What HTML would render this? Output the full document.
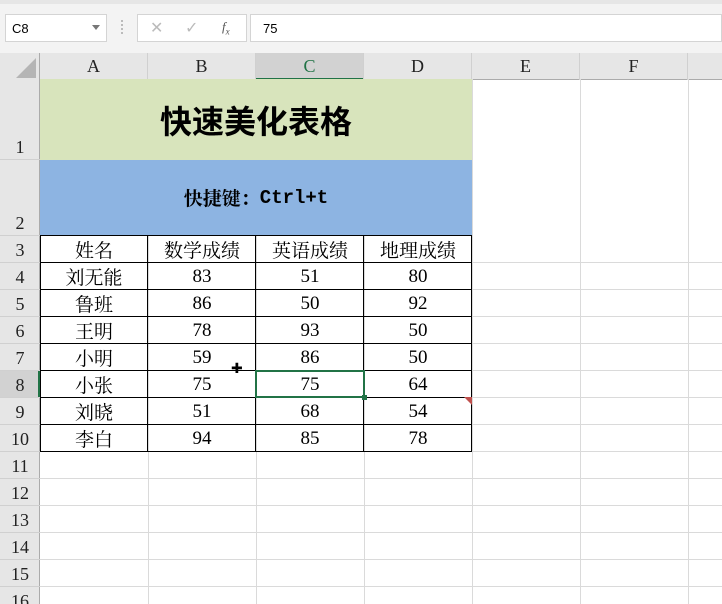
<!DOCTYPE html><html><head><meta charset="utf-8"><style>
html,body{margin:0;width:722px;height:604px;overflow:hidden}
body{background:#fff;position:relative;font-family:"Liberation Serif","Noto Serif CJK SC",serif}
.a{position:absolute;box-sizing:border-box}
.t{display:flex;align-items:center;justify-content:center;font-size:19px;color:#000}
</style></head><body>
<div class="a" style="left:0;top:0;width:722px;height:53px;background:#f3f3f3;border-top:4px solid #e6e6e6"></div>
<div class="a" style="left:5px;top:14px;width:102px;height:28px;background:#fff;border:1px solid #d4d4d4;font:13px 'Liberation Sans',sans-serif;padding:6px 6px">C8</div>
<div class="a" style="left:92px;top:25px;width:0;height:0;border-left:4px solid transparent;border-right:4px solid transparent;border-top:5px solid #777"></div>
<div class="a" style="left:121px;top:20px;width:2px;height:14px;border-left:2px dotted #bbb"></div>
<div class="a" style="left:137px;top:14px;width:110px;height:28px;background:#fff;border:1px solid #d4d4d4;font:16px 'Liberation Sans',sans-serif;color:#bbb"><span style="position:absolute;left:12px;top:3px">✕</span><span style="position:absolute;left:47px;top:3px">✓</span><span style="position:absolute;left:84px;top:4px;color:#555;font:italic 13px 'Liberation Serif',serif">f<sub style="font-size:9px">x</sub></span></div>
<div class="a" style="left:250px;top:14px;width:472px;height:28px;background:#fff;border:1px solid #d4d4d4;font:13px 'Liberation Sans',sans-serif;padding:6px 12px">75</div>
<div class="a" style="left:0;top:53px;width:722px;height:27px;background:#e6e6e6;border-bottom:1px solid #ababab"></div>
<div class="a" style="left:0;top:53px;width:40px;height:551px;background:#e6e6e6;border-right:1px solid #ababab"></div>
<div class="a" style="left:16px;top:58px;width:0;height:0;border-left:20px solid transparent;border-bottom:20px solid #b5b5b5"></div>
<div class="a" style="left:256px;top:53px;width:108px;height:27px;background:#d2d2d2;border-bottom:2px solid #217346"></div>
<div class="a" style="left:0;top:371px;width:40px;height:27px;background:#d2d2d2;border-right:2px solid #217346"></div>
<div id="hdr"></div>
<svg class="a" style="left:40px;top:79px" width="682" height="525">
<g stroke="#dadada" stroke-width="1">
<line x1="108.5" y1="0" x2="108.5" y2="525"/><line x1="216.5" y1="0" x2="216.5" y2="525"/><line x1="324.5" y1="0" x2="324.5" y2="525"/><line x1="432.5" y1="0" x2="432.5" y2="525"/><line x1="540.5" y1="0" x2="540.5" y2="525"/><line x1="648.5" y1="0" x2="648.5" y2="525"/>
</g>
<g id="hl" stroke="#dadada"></g>
<rect x="0" y="0" width="432" height="81" fill="#d8e4bc"/>
<rect x="0" y="81" width="432" height="76" fill="#8db4e2"/>
<g stroke="#000" stroke-width="1">
<line x1="0" y1="156.5" x2="432" y2="156.5"/><line x1="0" y1="183.5" x2="432" y2="183.5"/><line x1="0" y1="210.5" x2="432" y2="210.5"/><line x1="0" y1="237.5" x2="432" y2="237.5"/><line x1="0" y1="264.5" x2="432" y2="264.5"/><line x1="0" y1="291.5" x2="432" y2="291.5"/><line x1="0" y1="318.5" x2="432" y2="318.5"/><line x1="0" y1="345.5" x2="432" y2="345.5"/><line x1="0" y1="372.5" x2="432" y2="372.5"/>
<line x1="0.5" y1="156" x2="0.5" y2="373"/><line x1="107.5" y1="156" x2="107.5" y2="373"/><line x1="215.5" y1="156" x2="215.5" y2="373"/><line x1="323.5" y1="156" x2="323.5" y2="373"/><line x1="431.5" y1="156" x2="431.5" y2="373"/>
</g>
<rect x="216" y="292" width="108" height="26" fill="none" stroke="#217346" stroke-width="2"/>
<rect x="322" y="316" width="5" height="5" fill="#217346"/>
<polygon points="424,318 432,318 432,326" fill="#c0504d"/>
</svg>
<div class="a t" style="left:40px;top:79px;width:432px;height:81px;font-size:32px;font-weight:bold;font-family:'Noto Sans CJK SC',sans-serif;font-weight:600">快速美化表格</div>
<div class="a t" style="left:40px;top:160px;width:432px;height:76px;font-size:19px;font-weight:bold;padding-bottom:1px">快捷键：<span style="font-family:'Liberation Mono',monospace">Ctrl+t</span></div>
<div id="cells"></div>
<div class="a" style="left:231px;top:360px;font:14px sans-serif">✚</div>
<script>
var h='',cols='ABCDEF';for(var i=0;i<6;i++)h+='<div class="a t" style="left:'+(40+i*108)+'px;top:53px;width:108px;height:27px;border-right:1px solid #d0d0d0;font-size:18px;color:#222'+(i==2?';color:#217346':'')+'">'+cols[i]+'</div>';
var tops=[79,160,236],hts=[81,76,27];for(var r=4;r<=17;r++){tops.push(236+(r-3)*27);hts.push(27)}
for(var r=0;r<16;r++)h+='<div class="a" style="left:0;top:'+tops[r]+'px;width:40px;height:'+hts[r]+'px;border-bottom:1px solid #d0d0d0;font-size:18px;color:#222;display:flex;align-items:flex-end;justify-content:center;padding-bottom:1px">'+(r+1)+'</div>';
document.getElementById('hdr').innerHTML=h;
var hl='';for(var r=3;r<16;r++){var y=tops[r]-79-0.5;hl+='<line x1="432" y1="'+y+'" x2="682" y2="'+y+'"/>';if(r>=10)hl='<line x1="0" y1="'+y+'" x2="682" y2="'+y+'"/>'+hl}
document.getElementById('hl').innerHTML=hl;
var d=[['姓名','数学成绩','英语成绩','地理成绩'],['刘无能',83,51,80],['鲁班',86,50,92],['王明',78,93,50],['小明',59,86,50],['小张',75,75,64],['刘晓',51,68,54],['李白',94,85,78]];
var c='';for(var r=0;r<8;r++)for(var k=0;k<4;k++)c+='<div class="a t" style="left:'+(40+k*108)+'px;top:'+(235+r*27)+'px;width:108px;height:27px;padding-top:2px">'+d[r][k]+'</div>';
document.getElementById('cells').innerHTML=c;
</script>
</body></html>
